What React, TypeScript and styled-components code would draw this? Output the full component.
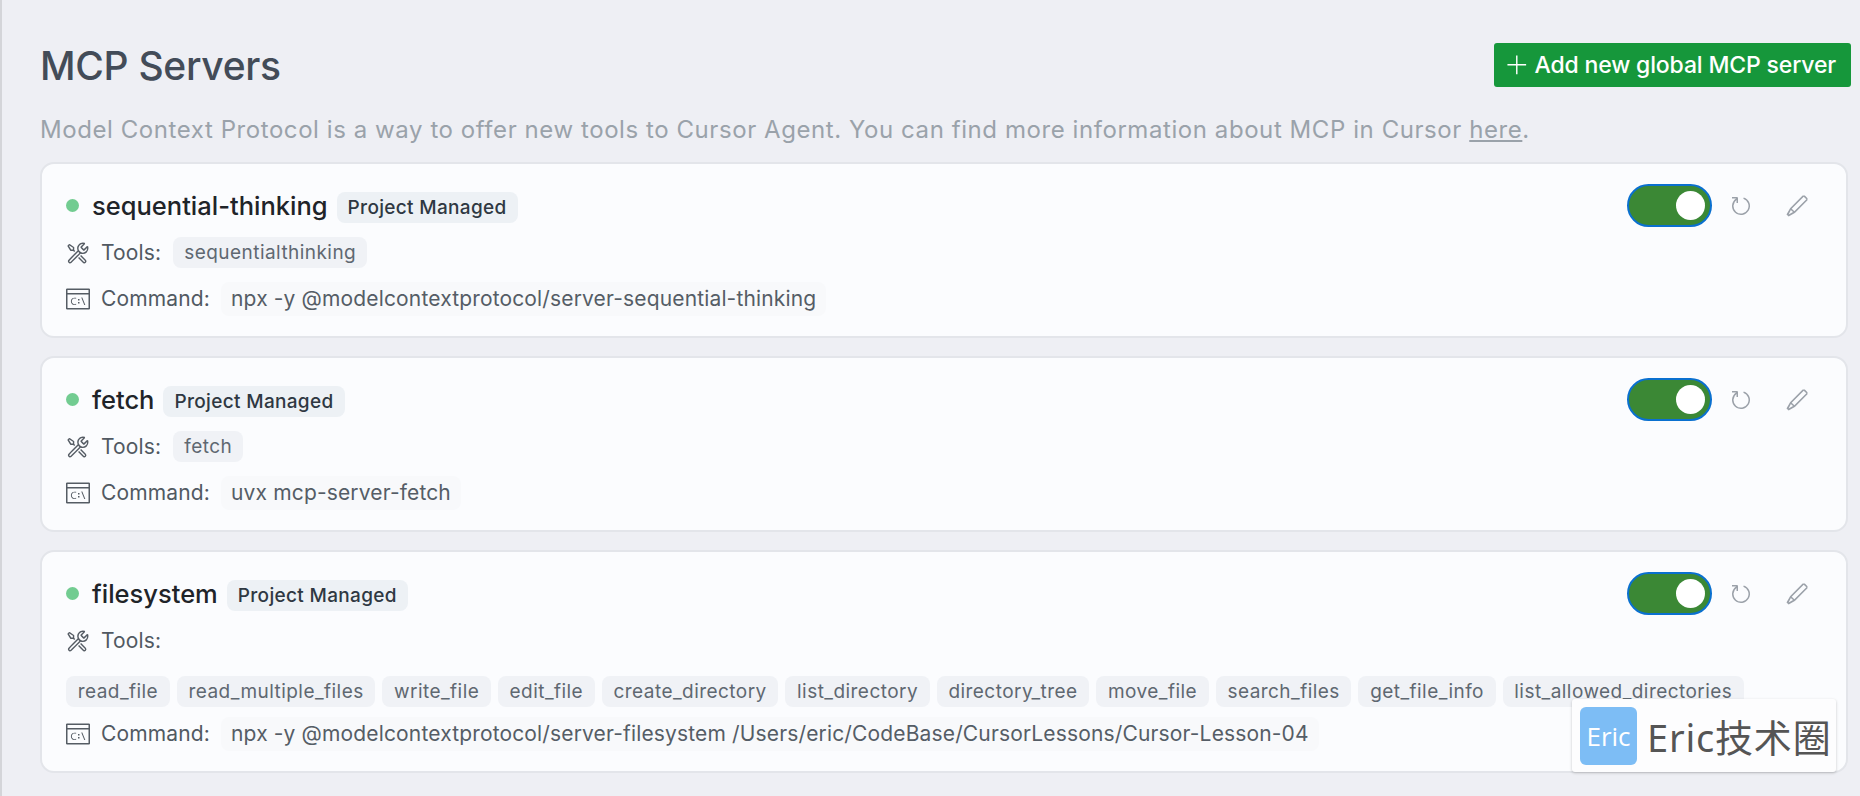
import { createGlobalStyle } from "styled-components";
import styled from "styled-components";
import { VscAdd, VscEdit, VscRefresh, VscTerminalCmd, VscTools } from "react-icons/vsc";

type Server = {
  name: string;
  tools: string[];
  command: string;
  wrapTools?: boolean;
};

const servers: Server[] = [
  {
    name: "sequential-thinking",
    tools: ["sequentialthinking"],
    command: "npx -y @modelcontextprotocol/server-sequential-thinking",
  },
  {
    name: "fetch",
    tools: ["fetch"],
    command: "uvx mcp-server-fetch",
  },
  {
    name: "filesystem",
    wrapTools: true,
    tools: [
      "read_file",
      "read_multiple_files",
      "write_file",
      "edit_file",
      "create_directory",
      "list_directory",
      "directory_tree",
      "move_file",
      "search_files",
      "get_file_info",
      "list_allowed_directories",
    ],
    command:
      "npx -y @modelcontextprotocol/server-filesystem /Users/eric/CodeBase/CursorLessons/Cursor-Lesson-04",
  },
];

function ServerCard({ server }: { server: Server }) {
  const chips = server.tools.map((tool) => <ToolChip key={tool}>{tool}</ToolChip>);

  return (
    <Card>
      <CardTop>
        <NameGroup>
          <StatusDot />
          <ServerName>{server.name}</ServerName>
          <Badge>Project Managed</Badge>
        </NameGroup>
        <Actions>
          <Toggle aria-hidden="true">
            <Knob />
          </Toggle>
          <ActionIcon>
            <VscRefresh size={24} />
          </ActionIcon>
          <ActionIcon>
            <VscEdit size={24} />
          </ActionIcon>
        </Actions>
      </CardTop>

      <Row>
        <RowIcon>
          <VscTools size={24} />
        </RowIcon>
        <RowLabel>Tools:</RowLabel>
        {!server.wrapTools && chips}
      </Row>
      {server.wrapTools && <ChipRow>{chips}</ChipRow>}

      <CommandRow>
        <RowIcon>
          <VscTerminalCmd size={24} />
        </RowIcon>
        <CommandLabel>Command:</CommandLabel>
        <CommandChip>{server.command}</CommandChip>
      </CommandRow>
    </Card>
  );
}

export default function App() {
  return (
    <Page>
      <GlobalStyle />
      <Header>
        <Title>MCP Servers</Title>
        <AddButton type="button">
          <VscAdd size={23} />
          Add new global MCP server
        </AddButton>
      </Header>
      <Description>
        Model Context Protocol is a way to offer new tools to Cursor Agent. You can find more
        information about MCP in Cursor <a href="#here">here</a>.
      </Description>
      <CardList>
        {servers.map((server) => (
          <ServerCard key={server.name} server={server} />
        ))}
      </CardList>
      <Watermark>
        <WatermarkLogo>Eric</WatermarkLogo>
        <WatermarkText>Eric技术圈</WatermarkText>
      </Watermark>
    </Page>
  );
}

const GlobalStyle = createGlobalStyle`
  html, body {
    margin: 0;
    padding: 0;
    background: #eeeff4;
  }
`;

const Page = styled.div`
  position: relative;
  box-sizing: border-box;
  width: 1860px;
  height: 796px;
  padding: 43px 12px 0 38px;
  overflow: hidden;
  background: #eeeff4;
  border-left: 2px solid #d4d5d9;
  font-family: Inter, "Liberation Sans", "Noto Sans CJK SC", sans-serif;
`;

const Header = styled.header`
  display: flex;
  align-items: center;
  justify-content: space-between;
  height: 44px;
  margin-right: -3px;
`;

const Title = styled.h1`
  margin: 0;
  font-size: 39px;
  font-weight: 450;
  letter-spacing: -0.3px;
  color: #434c58;
`;

const AddButton = styled.button`
  display: inline-flex;
  align-items: center;
  gap: 5px;
  height: 44px;
  padding: 0 15px 0 12px;
  border: none;
  border-radius: 3px;
  background: #16973b;
  color: #ffffff;
  font-family: inherit;
  font-size: 23px;
  font-weight: 500;
  letter-spacing: -0.15px;
`;

const Description = styled.p`
  margin: 28px 0 0;
  height: 30px;
  line-height: 30px;
  font-size: 24px;
  letter-spacing: 0.57px;
  color: #9aa2aa;

  a {
    color: inherit;
    text-decoration: underline;
  }
`;

const CardList = styled.div`
  display: flex;
  flex-direction: column;
  gap: 18px;
  margin-top: 17px;
`;

const Card = styled.section`
  box-sizing: border-box;
  display: flex;
  flex-direction: column;
  padding: 20px 21px 21px 24px;
  background: #fbfcfe;
  border: 2px solid #e3e5ea;
  border-radius: 14px;
`;

const CardTop = styled.div`
  display: flex;
  align-items: center;
  justify-content: space-between;
  height: 43px;
`;

const NameGroup = styled.div`
  display: flex;
  align-items: center;
`;

const StatusDot = styled.span`
  width: 13px;
  height: 13px;
  margin-right: 13px;
  border-radius: 50%;
  background: #72cc91;
`;

const ServerName = styled.span`
  margin-right: 9px;
  font-size: 25.5px;
  font-weight: 500;
  color: #1f2429;
`;

const Badge = styled.span`
  margin-top: 3px;
  padding: 0 11px;
  height: 31px;
  line-height: 31px;
  border-radius: 8px;
  background: #edf1f5;
  color: #2f3842;
  font-size: 19px;
  font-weight: 500;
  letter-spacing: 0.33px;
`;

const Actions = styled.div`
  display: flex;
  align-items: center;
`;

const Toggle = styled.div`
  box-sizing: border-box;
  display: flex;
  align-items: center;
  justify-content: flex-end;
  width: 85px;
  height: 43px;
  margin-right: 1px;
  padding-right: 5px;
  border: 2.5px solid #0a70cf;
  border-radius: 22px;
  background: #3b8835;
`;

const Knob = styled.span`
  width: 29px;
  height: 29px;
  border-radius: 50%;
  background: #ffffff;
`;

const ActionIcon = styled.span`
  display: flex;
  align-items: center;
  justify-content: center;
  width: 56px;
  height: 30px;
  color: #9ba1a9;
`;

const Row = styled.div`
  display: flex;
  align-items: center;
  height: 33px;
  margin-top: 9px;
`;

const CommandRow = styled(Row)`
  margin-top: 13px;
`;

const RowIcon = styled.span`
  display: flex;
  align-items: center;
  justify-content: center;
  width: 24px;
  margin-right: 11px;
  color: #555c64;
`;

const RowLabel = styled.span`
  margin-right: 12px;
  font-size: 21px;
  letter-spacing: 0.15px;
  color: #515962;
`;

const CommandLabel = styled(RowLabel)`
  margin-right: 11px;
`;

const ToolChip = styled.span`
  height: 31px;
  padding: 0 11px;
  line-height: 31px;
  border-radius: 8px;
  background: #f0f2f6;
  color: #5f6871;
  font-size: 19px;
  letter-spacing: 0.45px;
  white-space: nowrap;
`;

const ChipRow = styled.div`
  display: flex;
  gap: 7px;
  margin-top: 19px;

  ${ToolChip} {
    padding: 0 11.7px;
  }

  & + ${CommandRow} {
    margin-top: 10px;
  }
`;

const CommandChip = styled.span`
  height: 34px;
  padding: 0 10px;
  line-height: 34px;
  border-radius: 8px;
  background: #f8f9fb;
  color: #555d66;
  font-size: 21px;
  letter-spacing: 0.15px;
  white-space: nowrap;
`;

const Watermark = styled.aside`
  position: absolute;
  right: 24px;
  bottom: 24px;
  display: flex;
  align-items: center;
  gap: 10px;
  box-sizing: border-box;
  width: 264px;
  height: 73px;
  padding-left: 8px;
  border-radius: 3px;
  background: #fdfdfe;
  box-shadow: 0 1px 3px rgba(0, 0, 0, 0.22);
`;

const WatermarkLogo = styled.div`
  display: flex;
  align-items: center;
  justify-content: center;
  width: 57px;
  height: 58px;
  border-radius: 6px;
  background: #7dbdf5;
  color: #ffffff;
  font-family: "Open Sans", sans-serif;
  font-size: 26px;
  font-weight: 500;
`;

const WatermarkText = styled.div`
  font-family: "Noto Sans", "Noto Sans CJK SC", sans-serif;
  font-size: 38px;
  letter-spacing: 0.8px;
  color: #555555;
  white-space: nowrap;
`;
